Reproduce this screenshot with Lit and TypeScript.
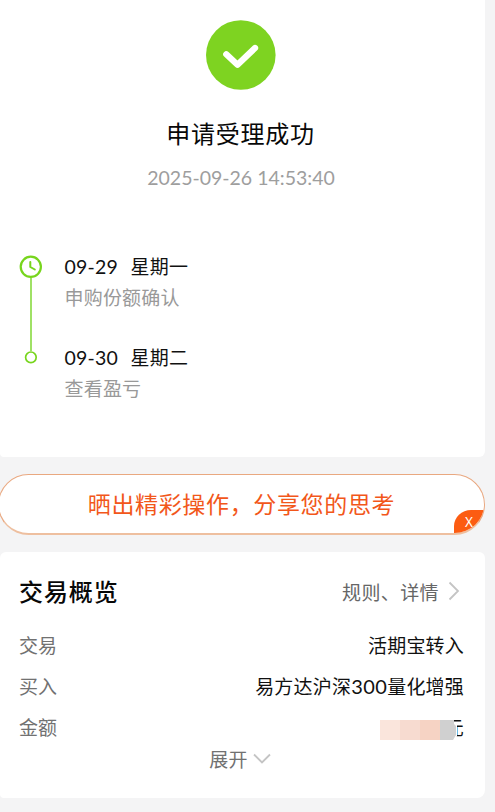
import { LitElement, html, css } from "lit";
import { customElement } from "lit/decorators.js";

@customElement("app-root")
export class AppRoot extends LitElement {
  static styles = css`
    :host {
      display: block;
      box-sizing: border-box;
      width: 495px;
      height: 812px;
      overflow: hidden;
      background: #f4f4f5;
      padding-right: 10px;
      font-family: Lato, "Noto Sans CJK SC", sans-serif;
      font-size: 19px;
      letter-spacing: 0.2px;
      color: #111;
    }
    svg { display: block; }
    .card { background: #fff; box-sizing: border-box; }
    .result {
      height: 457px;
      border-radius: 0 0 6px 4px;
      padding-top: 20px;
      display: flex;
      flex-direction: column;
    }
    .check { align-self: center; margin-right: 4px; }
    .title {
      margin: 26px 4px 0 0;
      text-align: center;
      font-size: 24px;
      line-height: 36px;
      letter-spacing: 0.75px;
      color: #080808;
    }
    .time {
      margin: 12px 3px 0 0;
      text-align: center;
      font-size: 19.5px;
      line-height: 28px;
      letter-spacing: 0;
      color: #9e9e9e;
      white-space: nowrap;
    }
    .steps { display: flex; margin-top: 60px; padding-left: 18px; }
    .words { margin-left: 20.5px; }
    .day { display: flex; line-height: 30px; height: 30px; }
    .day .date { width: 66px; font-size: 19.5px; }
    .note { line-height: 31px; height: 30px; color: #999; letter-spacing: 0.2px; }
    .note.first { margin-bottom: 31px; }
    .share {
      position: relative;
      box-sizing: border-box;
      height: 61px;
      margin: 17px 0;
      margin-left: -2px;
      border: 1px solid #e9a880;
      border-bottom: 2px solid #eebf9f;
      border-radius: 31px;
      background: #fff;
      overflow: hidden;
      text-align: center;
      font-size: 23px;
      line-height: 58px;
      letter-spacing: 0.65px;
      color: #f2571a;
    }
    .close {
      position: absolute;
      right: -1px;
      bottom: -1px;
      width: 31px;
      height: 24px;
      border-top-left-radius: 17px 16px;
      background: #fc5c12;
      color: #fff;
      font-size: 13.5px;
      line-height: 25px;
      letter-spacing: 0;
      text-align: center;
      font-family: "Noto Sans", sans-serif;
    }
    .close span { margin-right: 1px; }
    .overview { height: 246px; border-radius: 6px 6px 8px 4px; padding: 18px 21px 0 19px; }
    .head { display: flex; align-items: center; height: 42px; margin-bottom: 13px; }
    .head .name {
      flex: 1;
      font-size: 24px;
      font-weight: 500;
      line-height: 38px;
      margin-top: 1px;
      letter-spacing: 0.9px;
      color: #080808;
    }
    .rules { color: #666; margin-right: 9px; letter-spacing: 0.4px; }
    .chev { margin-right: 4px; }
    .row {
      display: flex;
      justify-content: space-between;
      height: 41px;
      line-height: 41px;
    }
    .digits { font-size: 20px; letter-spacing: 0.4px; }
    .key { color: #717171; letter-spacing: 0; }
    .amount { position: relative; }
    .mask { position: absolute; right: 7px; top: 10px; }
    .more {
      display: flex;
      align-items: center;
      justify-content: center;
      gap: 5px;
      height: 30px;
      margin: -5px 3px 0 0;
      color: #717171;
    }
  `;

  render() {
    return html`
      <section class="card result">
        <svg class="check" width="70" height="70" viewBox="0 0 70 70">
          <circle cx="34.8" cy="35" r="34.8" fill="#7ed321" />
          <path d="M20.3 34.3L31.5 44.8L49 28" fill="none" stroke="#fff" stroke-width="6.3" stroke-linecap="round" stroke-linejoin="round" />
        </svg>
        <div class="title">申请受理成功</div>
        <div class="time">2025-09-26 14:53:40</div>
        <div class="steps">
          <svg width="26" height="121" viewBox="0 0 26 121">
            <path d="M13 25.5V99" stroke="#8fdc4a" stroke-width="1.7" />
            <circle cx="12.8" cy="14.8" r="10.1" fill="#fff" stroke="#77d51d" stroke-width="2.2" />
            <path d="M12.3 10V15L16.8 17.5" fill="none" stroke="#77d51d" stroke-width="2" stroke-linecap="round" stroke-linejoin="round" />
            <circle cx="12.9" cy="105.3" r="5.3" fill="#fff" stroke="#77d51d" stroke-width="1.7" />
          </svg>
          <div class="words">
            <div class="day"><span class="date">09-29</span><span>星期一</span></div>
            <div class="note first">申购份额确认</div>
            <div class="day"><span class="date">09-30</span><span>星期二</span></div>
            <div class="note">查看盈亏</div>
          </div>
        </div>
      </section>

      <div class="share">晒出精彩操作，分享您的思考<span class="close"><span>X</span></span></div>

      <section class="card overview">
        <div class="head">
          <span class="name">交易概览</span>
          <span class="rules">规则、详情</span>
          <svg class="chev" width="12" height="20" viewBox="0 0 12 20">
            <path d="M1.5 1.5L10 10L1.5 18.5" fill="none" stroke="#c4c4c4" stroke-width="1.8" />
          </svg>
        </div>
        <div class="row"><span class="key">交易</span><span>活期宝转入</span></div>
        <div class="row"><span class="key">买入</span><span>易方达沪深<span class="digits">300</span>量化增强</span></div>
        <div class="row">
          <span class="key">金额</span>
          <span class="amount">元
            <svg class="mask" width="77" height="23" viewBox="0 0 77 23">
              <path d="M60 0H73.5V5H77V19L73 23H60Z" fill="#fff" />
              <path d="M0 3H20V23H0Z" fill="#fae5dc" />
              <path d="M20 3H40V23H20Z" fill="#f7dbd0" />
              <path d="M40 3H60V23H40Z" fill="#f6d3c4" />
              <path d="M60 3H74V7L76 9V18L73 23H60Z" fill="#d0d0d0" />
            </svg>
          </span>
        </div>
        <div class="more">
          展开
          <svg width="18" height="11" viewBox="0 0 18 11">
            <path d="M1 1.5L9 9.5L17 1.5" fill="none" stroke="#c4c4c4" stroke-width="1.8" />
          </svg>
        </div>
      </section>
    `;
  }
}
